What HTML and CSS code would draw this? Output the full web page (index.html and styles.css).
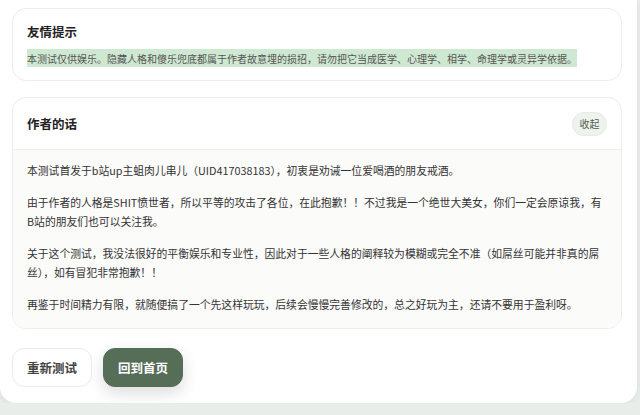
FILE: index.html
```html
<!DOCTYPE html>
<html lang="zh-CN">
<head>
  <meta charset="UTF-8" />
  <meta name="viewport" content="width=device-width, initial-scale=1.0" />
  <title>作者的话</title>
  <link rel="stylesheet" href="styles.css">
</head>
<body>
  <div class="page">
    <div class="card tip">
      <h2>友情提示</h2>
      <p><span class="mark">本测试仅供娱乐。隐藏人格和傻乐兜底都属于作者故意埋的损招，请勿把它当成医学、心理学、相学、命理学或灵异学依据。</span></p>
    </div>

    <div class="card note">
      <div class="note-head">
        <h2>作者的话</h2>
        <button class="pill">收起</button>
      </div>
      <div class="note-body">
        <p>本测试首发于b站up主蛆肉儿串儿（UID417038183），初衷是劝诫一位爱喝酒的朋友戒酒。</p>
        <p>由于作者的人格是SHIT愤世者，所以平等的攻击了各位，在此抱歉！！不过我是一个绝世大美女，你们一定会原谅我，有B站的朋友们也可以关注我。</p>
        <p>关于这个测试，我没法很好的平衡娱乐和专业性，因此对于一些人格的阐释较为模糊或完全不准（如屌丝可能并非真的屌丝），如有冒犯非常抱歉！！</p>
        <p>再鉴于时间精力有限，就随便搞了一个先这样玩玩，后续会慢慢完善修改的，总之好玩为主，还请不要用于盈利呀。</p>
      </div>
    </div>

    <div class="actions">
      <button class="btn">重新测试</button>
      <button class="btn primary">回到首页</button>
    </div>
  </div>
</body>
</html>
```

FILE: styles.css
```css
body {
  margin: 0;
  background-color: #e9ede9;
  font-family: "Noto Sans CJK SC", "Noto Sans", sans-serif;
  color: #333;
}
.page {
  background: #fff;
  margin-right: 3px;
  padding: 8px 15px 16px 12px;
  border-radius: 0 0 16px 16px;
  box-shadow: 0 2px 8px rgba(0, 0, 0, 0.06);
}
.card {
  border: 1px solid #ececec;
  border-radius: 14px;
  background: #fff;
}
h2 {
  margin: 0;
  font-size: 12.5px;
  line-height: 18px;
  font-weight: bold;
  color: #222;
}
.tip {
  padding: 14px 15px 14px 14px;
}
.tip p {
  margin: 8px 0 0;
  font-size: 10px;
  line-height: 17px;
  color: #555;
}
.mark {
  background: #cfe8d1;
  padding: 1.5px 0;
}
.note {
  margin-top: 16px;
  overflow: hidden;
}
.note-head {
  display: flex;
  justify-content: space-between;
  align-items: center;
  height: 51px;
  padding: 0 14px;
  border-bottom: 1px solid #eee;
}
.pill {
  width: 35px;
  height: 24px;
  padding: 0;
  border: 1px solid #e4ece3;
  border-radius: 12px;
  background: #eef3ed;
  color: #4d5b4d;
  font-family: inherit;
  font-size: 10px;
}
.note-body {
  background: #fbfbfa;
  padding: 11px 17px 14px 14px;
}
.note-body p {
  margin: 0 0 13px;
  font-size: 10.8px;
  line-height: 19px;
}
.note-body p:last-child {
  margin-bottom: 0;
}
.actions {
  display: flex;
  gap: 11px;
  margin-top: 19px;
}
.btn {
  width: 80px;
  height: 39px;
  border: 1px solid #ebebeb;
  border-radius: 12px;
  background: #fff;
  color: #444;
  font-family: inherit;
  font-size: 12.5px;
  font-weight: bold;
}
.btn.primary {
  border-color: #566e57;
  background: #566e57;
  color: #fff;
  box-shadow: 0 6px 16px rgba(0, 0, 0, 0.14);
}
```
